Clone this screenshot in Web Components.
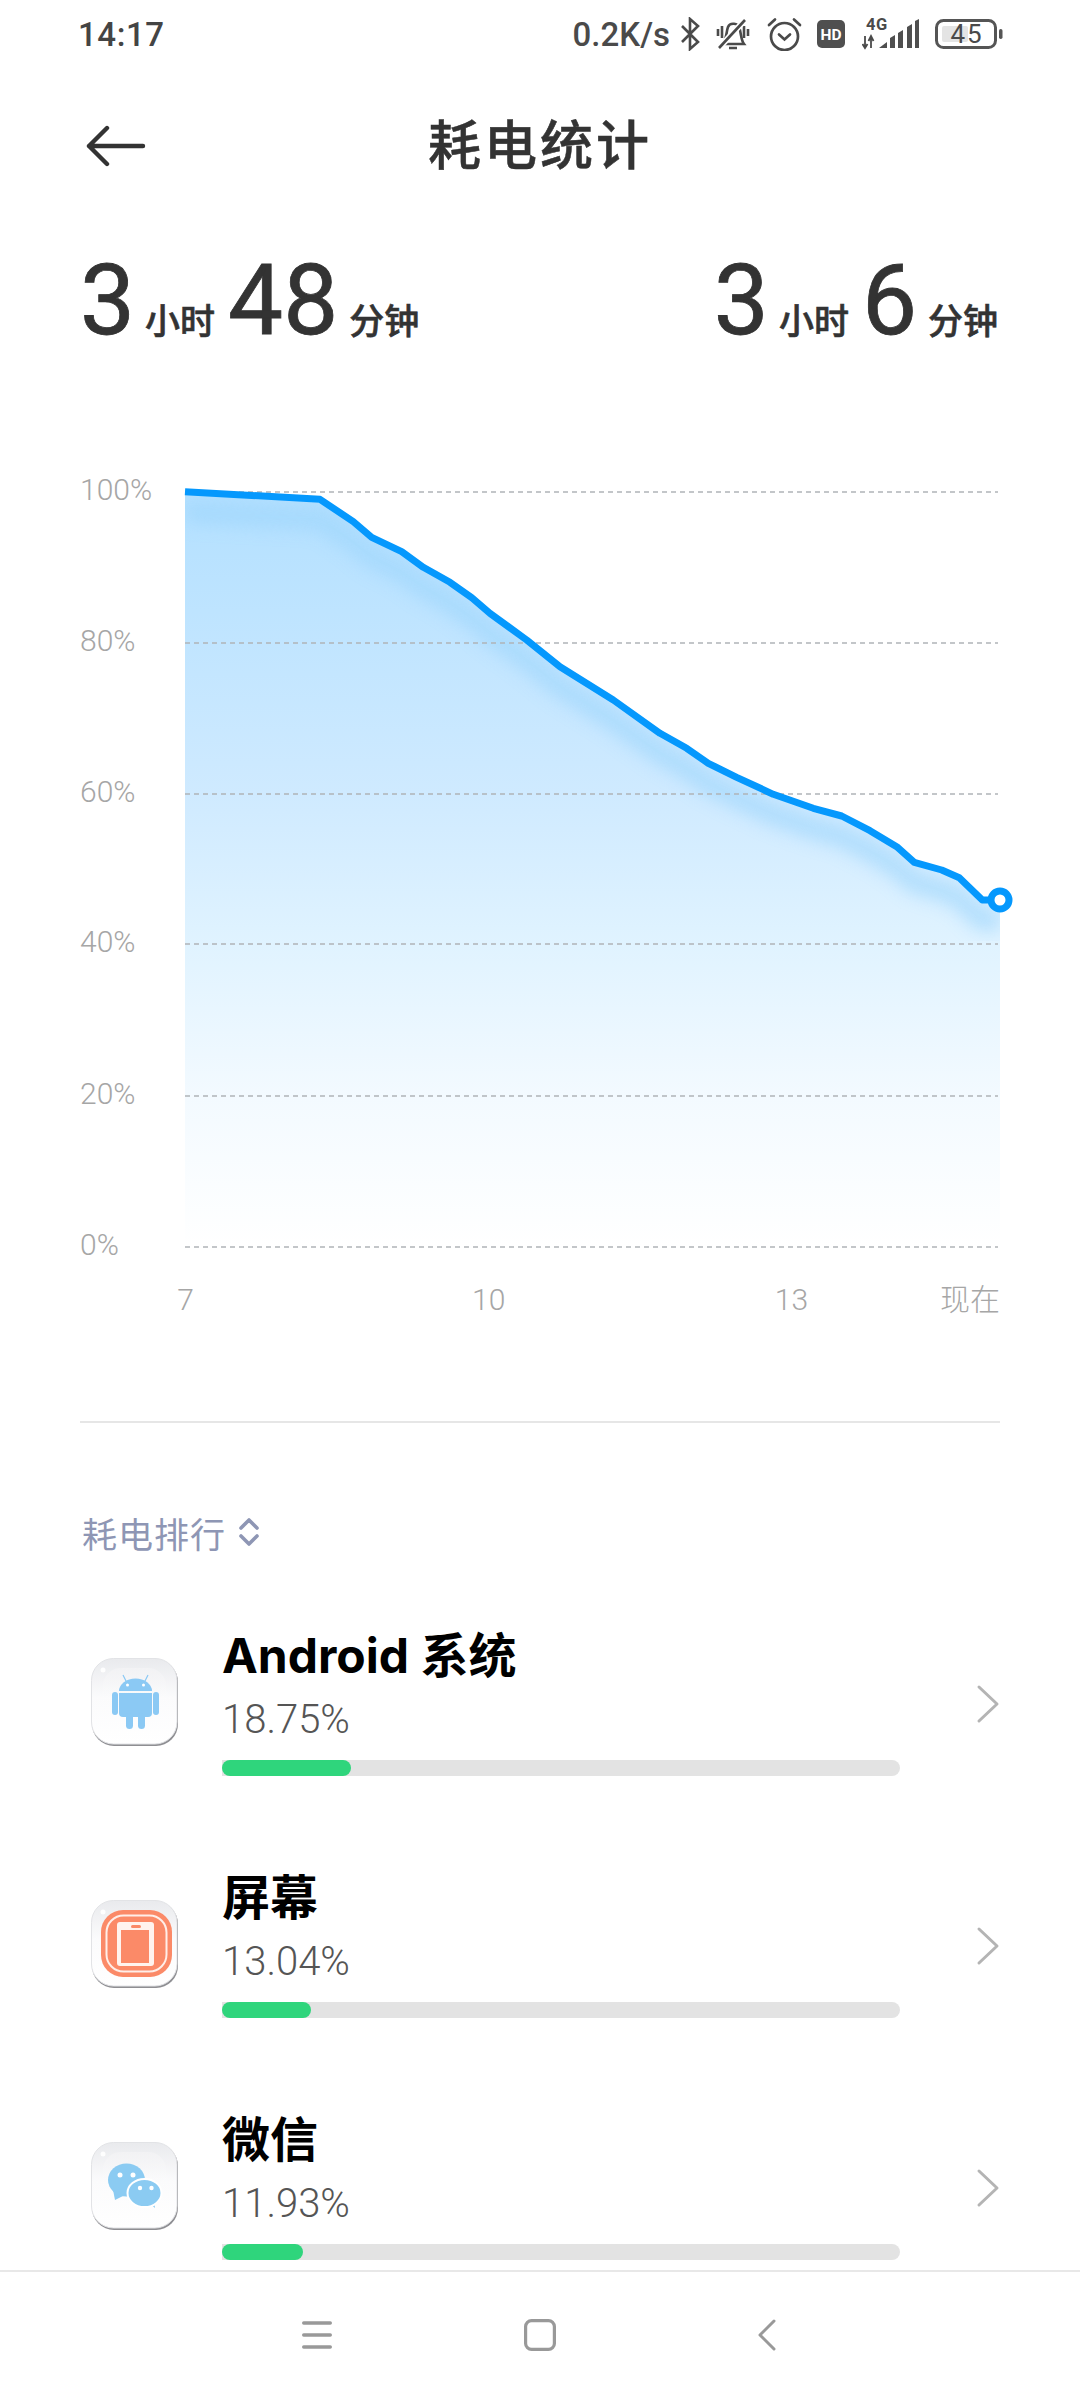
<!DOCTYPE html>
<html lang="zh">
<head>
<meta charset="utf-8">
<title>耗电统计</title>
<style>
	html, body { margin: 0; padding: 0; background: #fff; }
	body {
		width: 1080px;
		height: 2400px;
		overflow: hidden;
		display: flex;
		flex-direction: column;
		font-family: Roboto, "Noto Sans CJK SC", sans-serif;
	}
	main { flex: 1; min-height: 0; overflow: hidden; }
</style>
</head>
<body>
<status-bar></status-bar>
<title-bar>耗电统计</title-bar>
<main>
	<usage-stats></usage-stats>
	<battery-chart></battery-chart>
	<rank-head>耗电排行</rank-head>
	<app-row name="Android 系统" percent="18.75" width="129">
		<app-icon kind="android"></app-icon>
	</app-row>
	<app-row name="屏幕" percent="13.04" width="89">
		<app-icon kind="screen"></app-icon>
	</app-row>
	<app-row name="微信" percent="11.93" width="81">
		<app-icon kind="wechat"></app-icon>
	</app-row>
</main>
<nav-bar></nav-bar>

<script>
class StatusBar extends HTMLElement {
	constructor() {
		super();
		let shadowRoot = this.attachShadow({mode: 'open'});
		shadowRoot.innerHTML = `
			<style>
				:host {
					display: flex;
					align-items: center;
					height: 68px;
					padding: 0 77px 0 78px;
					color: #444;
					font-family: Roboto, sans-serif;
				}
				.time { font-size: 33px; font-weight: 500; letter-spacing: .6px; margin-right: auto; }
				.speed { font-size: 33px; font-weight: 500; color: #4a4a4a; margin-right: 10px; flex: none; white-space: nowrap; }
				svg { display: block; flex: none; }
				text { font-family: Roboto, sans-serif; }
			</style>
			<span class="time">14:17</span>
			<span class="speed">0.2K/s</span>
			<svg width="20" height="34" viewBox="0 0 20 34" fill="none" stroke="#4a4a4a" stroke-width="2.6">
				<path d="M2 9 18 25 10 32V2L18 9 2 25"/>
			</svg>
			<svg style="margin-left:16px" width="34" height="32" viewBox="0 0 34 32" fill="none" stroke="#4a4a4a" stroke-width="2.6">
				<path d="M6 26H28C25 22 25 15 23.500 10 22 5 14 4 12 9 10 14 11 22 6 26Z"/>
				<path d="M13 30H21M2 11V18M6 8V20M28 8V20M32 11V18"/>
				<path d="M3 30 29 2" stroke="#fff" stroke-width="6"/>
				<path d="M3 30 29 2"/>
			</svg>
			<svg style="margin-left:17px" width="35" height="34" viewBox="0 0 35 34" fill="none" stroke="#4a4a4a" stroke-width="2.700" stroke-linecap="round">
				<circle cx="17.500" cy="19.500" r="13.500"/>
				<path d="M12 17.500 17.500 22.500 23 17.500M2 8 8 2.500M27 2.500 33 8"/>
			</svg>
			<svg style="margin-left:15px" width="28" height="28" viewBox="0 0 28 28">
				<rect width="28" height="28" rx="5" fill="#4f4f4f"/>
				<text x="14" y="19.500" font-size="15.500" font-weight="700" fill="#fff" text-anchor="middle">HD</text>
			</svg>
			<svg style="margin-left:17px" width="57" height="34" viewBox="0 0 57 34">
				<text x="4" y="13" font-size="16.500" font-weight="700" letter-spacing=".5" fill="#4a4a4a">4G</text>
				<path d="M3 19V30M0.500 27 3 31 5.500 27M9 31V20M6.500 24 9 19 11.500 24" fill="none" stroke="#4a4a4a" stroke-width="1.800"/>
				<path d="M17 31 25 25V31ZM28 31V21L33 18V31ZM36 31V16L41 13V31ZM45 31V10L50 7V31ZM53 31V4L57 2V31Z" fill="#4f4f4f"/>
			</svg>
			<svg style="margin-left:16px" width="68" height="30" viewBox="0 0 68 30">
				<rect x="1.500" y="1.500" width="59" height="27" rx="7" fill="none" stroke="#555" stroke-width="3"/>
				<rect x="7" y="7" width="26" height="16" rx="2" fill="#e4e4e4"/>
				<text x="32" y="24" font-size="26" letter-spacing="2" fill="#4a4a4a" text-anchor="middle">45</text>
				<rect x="64" y="10" width="3.500" height="10" rx="1.700" fill="#555"/>
			</svg>
		`;
	}
}
customElements.define('status-bar', StatusBar);

class TitleBar extends HTMLElement {
	constructor() {
		super();
		let shadowRoot = this.attachShadow({mode: 'open'});
		shadowRoot.innerHTML = `
			<style>
				:host {
					display: grid;
					grid-template-columns: 1fr auto 1fr;
					align-items: center;
					height: 156px;
					padding: 0 80px;
					color: #333;
				}
				.title {
					font-family: "Noto Sans CJK SC", sans-serif;
					font-size: 53px;
					font-weight: 500;
					letter-spacing: 3px;
					margin-bottom: 9px;
					-webkit-text-stroke: .5px #333;
				}
				svg { display: block; margin-left: 6px; }
			</style>
			<svg width="60" height="42" viewBox="0 0 60 42" fill="none" stroke="#333" stroke-width="4.400" stroke-linecap="round" stroke-linejoin="round">
				<path d="M21 3 3 21 21 39M3 21H57"/>
			</svg>
			<div class="title"><slot></slot></div>
			<div></div>
		`;
	}
}
customElements.define('title-bar', TitleBar);

class UsageStats extends HTMLElement {
	constructor() {
		super();
		let shadowRoot = this.attachShadow({mode: 'open'});
		shadowRoot.innerHTML = `
			<style>
				:host {
					display: flex;
					justify-content: space-between;
					align-items: baseline;
					height: 216px;
					box-sizing: border-box;
					padding: 21px 82px 0 80px;
					color: #333;
				}
				.group { display: flex; align-items: baseline; }
				b {
					font-family: Roboto, sans-serif;
					font-size: 98px;
					font-weight: 400;
					line-height: 112px;
					-webkit-text-stroke: .8px #333;
				}
				span {
					font-family: "Noto Sans CJK SC", sans-serif;
					font-size: 35px;
					font-weight: 500;
					-webkit-text-stroke: .6px #333;
					margin: 0 13px 0 10px;
				}
				span:last-child { margin-right: 0; margin-left: 11px; }
			</style>
			<div class="group"><b>3</b><span>小时</span><b>48</b><span>分钟</span></div>
			<div class="group"><b>3</b><span>小时</span><b>6</b><span>分钟</span></div>
		`;
	}
}
customElements.define('usage-stats', UsageStats);

class BatteryChart extends HTMLElement {
	constructor() {
		super();
		let pts = [[185,491.7],[320,499.3],[353.3,521.7],[371.7,537.3],[401.7,551.7],[423.3,567.3],[450,582.3],[471.7,597.7],[490,613.3],[526.7,640],[560,666.7],[613.3,700],[660,733.3],[686.7,748.3],[708.3,763.3],[736.7,777.3],[773.3,794.3],[813.3,808.3],[841.7,816],[870,830.7],[896.7,846.7],[914.3,862.3],[941.7,870],[959.3,877.7],[982.3,900],[1000,900]];
		let line = 'M' + pts.map(p => p.join(' ')).join('L');
		let ys = [[492,'100%'],[643,'80%'],[794,'60%'],[944,'40%'],[1096,'20%'],[1247,'0%']];
		let grid = ys.map(y => `
			<line x1="185" x2="998" y1="${y[0]}" y2="${y[0]}" class="grid"/>
			<text x="80" y="${y[0] + 8}" class="lbl">${y[1]}</text>`).join('');
		let xs = [[185.500,'7'],[488.700,'10'],[791.500,'13']];
		let xlab = xs.map(x => `<text x="${x[0]}" y="1310" class="lbl" text-anchor="middle">${x[1]}</text>`).join('');
		let shadowRoot = this.attachShadow({mode: 'open'});
		shadowRoot.innerHTML = `
			<style>
				:host { display: block; height: 900px; }
				svg { display: block; }
				.grid { stroke: #b0b4b8; stroke-width: 1.500; stroke-dasharray: 5 4; }
				.lbl { font-family: Roboto, "Noto Sans CJK SC", sans-serif; font-size: 30px; font-weight: 300; fill: #a6a6a6; }
			</style>
			<svg width="1080" height="900" viewBox="0 440 1080 900">
				<defs>
					<linearGradient id="area" gradientUnits="userSpaceOnUse" x1="0" y1="492" x2="0" y2="1247">
						<stop offset="0" stop-color="#b3e0ff"/>
						<stop offset=".4" stop-color="#cfeaff"/>
						<stop offset=".6" stop-color="#e0f3ff"/>
						<stop offset=".8" stop-color="#f3faff"/>
						<stop offset="1" stop-color="#fff"/>
					</linearGradient>
					<clipPath id="inside"><path d="${line}V1247H185Z"/></clipPath>
					<filter id="soft" x="-5%" y="-5%" width="110%" height="110%"><feGaussianBlur stdDeviation="9"/></filter>
				</defs>
				<path d="${line}V1247H185Z" fill="url(#area)"/>
				<g clip-path="url(#inside)">
					<path d="${line}" transform="translate(0 20)" fill="none" stroke="#9ed6fc" stroke-width="20" opacity=".7" filter="url(#soft)"/>
				</g>
				${grid}
				${xlab}
				<text x="1000" y="1310" class="lbl" text-anchor="end">现在</text>
				<path d="${line}" fill="none" stroke="#0598fd" stroke-width="7" stroke-linejoin="round"/>
				<circle cx="1000" cy="900" r="9" fill="#fff" stroke="#0598fd" stroke-width="7"/>
			</svg>
		`;
	}
}
customElements.define('battery-chart', BatteryChart);

class RankHead extends HTMLElement {
	constructor() {
		super();
		let shadowRoot = this.attachShadow({mode: 'open'});
		shadowRoot.innerHTML = `
			<style>
				:host {
					display: flex;
					align-items: center;
					gap: 12px;
					margin: 81px 80px 15px;
					padding-top: 76px;
					height: 66px;
					border-top: 2px solid #e6e6e6;
					color: #8e96b4;
					font-family: "Noto Sans CJK SC", sans-serif;
					font-size: 35px;
					letter-spacing: 1px;
				}
				svg { display: block; }
				.text { margin-left: 2px; }
			</style>
			<span class="text"><slot></slot></span>
			<svg width="22" height="30" viewBox="0 0 22 30" fill="none" stroke="#8e96b4" stroke-width="3.600" stroke-linecap="round" stroke-linejoin="round">
				<path d="M3 11 11 3 19 11M3 19 11 27 19 19"/>
			</svg>
		`;
	}
}
customElements.define('rank-head', RankHead);

class AppRow extends HTMLElement {
	constructor() {
		super();
		let shadowRoot = this.attachShadow({mode: 'open'});
		shadowRoot.innerHTML = `
			<style>
				:host {
					display: flex;
					align-items: center;
					height: 242px;
					padding-left: 91px;
				}
				.icon { width: 87px; height: 87px; flex: none; margin-right: 44px; }
				.body { width: 678px; flex: none; }
				.name {
					font-family: Inter, "Noto Sans CJK SC", sans-serif;
					font-size: 48px;
					font-weight: 700;
					line-height: 60px;
					color: #000;
				}
				.pct {
					font-family: Roboto, sans-serif;
					font-size: 40px;
					font-weight: 300;
					line-height: 50px;
					margin-top: 9px;
					color: #555;
				}
				.track {
					margin-top: 15px;
					height: 16px;
					border-radius: 0 8px 8px 0;
					background: #e3e3e3;
				}
				.fill { height: 100%; border-radius: 8px; background: #2fd57c; }
				svg.more { display: block; margin: 6px 0 0 76px; flex: none; }
			</style>
			<div class="icon"><slot></slot></div>
			<div class="body">
				<div class="name"></div>
				<div class="pct"></div>
				<div class="track"><div class="fill"></div></div>
			</div>
			<svg class="more" width="24" height="40" viewBox="0 0 24 40" fill="none" stroke="#b4b4b4" stroke-width="3" stroke-linecap="round" stroke-linejoin="round">
				<path d="M3 3 21 20 3 37"/>
			</svg>
		`;
		shadowRoot.querySelector('.name').textContent = this.getAttribute('name');
		shadowRoot.querySelector('.pct').textContent = this.getAttribute('percent') + '%';
		shadowRoot.querySelector('.fill').style.width = this.getAttribute('width') + 'px';
	}
}
customElements.define('app-row', AppRow);

class AppIcon extends HTMLElement {
	constructor() {
		super();
		let kind = this.getAttribute('kind');
		let art = {
			android: `
				<g fill="#8bc9f4">
					<path d="M28 33a16.500 12.500 0 0 1 33 0Z"/>
					<path d="M28 35H61V55a4 4 0 0 1-4 4H32a4 4 0 0 1-4-4Z"/>
					<rect x="21" y="34" width="6" height="23" rx="3"/>
					<rect x="62" y="34" width="6" height="23" rx="3"/>
					<rect x="35" y="55" width="7" height="16" rx="3.500"/>
					<rect x="47" y="55" width="7" height="16" rx="3.500"/>
				</g>
				<path d="M35 23 32 17M54 23 57 17" stroke="#8bc9f4" stroke-width="1.200"/>
				<circle cx="36.500" cy="27" r="1.500" fill="#fff"/>
				<circle cx="52.500" cy="27" r="1.500" fill="#fff"/>`,
			screen: `
				<rect x="10" y="10" width="71" height="67" rx="22" fill="#fb8a68"/>
				<rect x="15.500" y="15.500" width="60" height="56" rx="17" fill="none" stroke="#fff" stroke-width="2" opacity=".85"/>
				<rect x="26" y="22" width="37" height="44" rx="3" fill="#fff3ee"/>
				<rect x="30" y="30" width="28" height="33" fill="#fb8a68"/>
				<rect x="40" y="25" width="10" height="3" rx="1.500" fill="#fb8a68"/>`,
			wechat: `
				<g fill="#8bcbf2">
					<ellipse cx="35.500" cy="38" rx="18.500" ry="16.500"/>
					<path d="M22 48 24 58 34 53Z"/>
				</g>
				<circle cx="29" cy="33" r="2.500" fill="#fff"/>
				<circle cx="42" cy="33" r="2.500" fill="#fff"/>
				<path d="M57 60 64 66 63 57Z" fill="#8bcbf2"/>
				<ellipse cx="53.500" cy="51" rx="17" ry="14" fill="#8bcbf2" stroke="#fff" stroke-width="2"/>
				<circle cx="49" cy="46" r="2.200" fill="#fff"/>
				<circle cx="60.500" cy="46" r="2.200" fill="#fff"/>`
		}[kind];
		let shadowRoot = this.attachShadow({mode: 'open'});
		shadowRoot.innerHTML = `
			<style>
				:host { display: block; width: 87px; height: 87px; }
				svg { display: block; overflow: visible; }
			</style>
			<svg width="87" height="87" viewBox="0 0 87 87">
				<defs>
					<linearGradient id="base" x1="0" y1="0" x2="0" y2="1">
						<stop offset="0" stop-color="#e9eaed"/>
						<stop offset=".45" stop-color="#fbfbfc"/>
						<stop offset="1" stop-color="#fff"/>
					</linearGradient>
					<linearGradient id="ring" x1="0" y1="0" x2="0" y2="1">
						<stop offset="0" stop-color="#f2f2f4"/>
						<stop offset=".6" stop-color="#fff" stop-opacity="0"/>
					</linearGradient>
				</defs>
				<rect x="1" y="2" width="86" height="86" rx="22" fill="#8f8f93"/>
				<rect x=".5" y=".5" width="85.500" height="85.500" rx="22" fill="url(#base)" stroke="#e2e3e6"/>
				<rect x="12" y="10" width="63" height="66" rx="18" fill="url(#ring)"/>
				<circle cx="12" cy="12" r="2.500" fill="#fff" opacity=".9"/>
				${art}
			</svg>
		`;
	}
}
customElements.define('app-icon', AppIcon);

class NavBar extends HTMLElement {
	constructor() {
		super();
		let shadowRoot = this.attachShadow({mode: 'open'});
		shadowRoot.innerHTML = `
			<style>
				:host {
					display: flex;
					align-items: center;
					height: 130px;
					box-sizing: border-box;
					padding: 0 0 2px 302px;
					border-top: 2px solid #e8e8e8;
					background: #fff;
				}
				svg { display: block; flex: none; }
			</style>
			<svg width="30" height="28" viewBox="0 0 30 28" stroke="#999" stroke-width="3.400" stroke-linecap="round">
				<path d="M1.700 2H28.300M1.700 14H28.300M1.700 26H28.300"/>
			</svg>
			<svg style="margin-left:192px" width="32" height="32" viewBox="0 0 32 32" fill="none" stroke="#999" stroke-width="3.200">
				<rect x="1.600" y="1.600" width="28.800" height="28.800" rx="6"/>
			</svg>
			<svg style="margin-left:202px" width="18" height="32" viewBox="0 0 18 32" fill="none" stroke="#999" stroke-width="3" stroke-linecap="round" stroke-linejoin="round">
				<path d="M16 2 2 16 16 30"/>
			</svg>
		`;
	}
}
customElements.define('nav-bar', NavBar);
</script>
</body>
</html>
